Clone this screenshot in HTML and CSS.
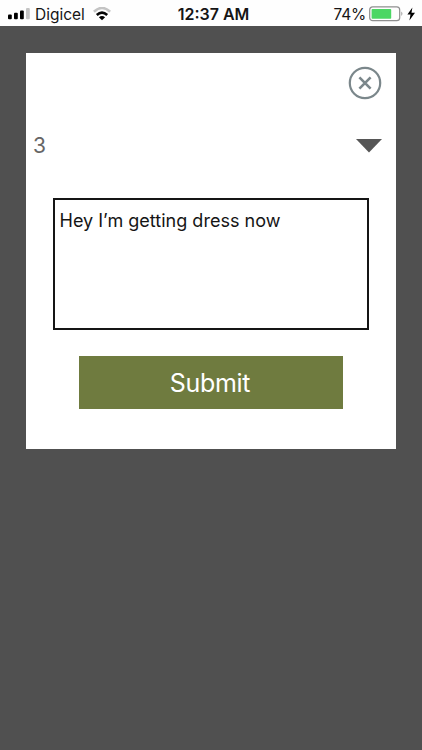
FILE: index.html
```html
<!DOCTYPE html>
<html lang="en">
<head>
<meta charset="utf-8">
<title>Message</title>
<link rel="stylesheet" href="styles.css">
</head>
<body>
<header class="status">
  <div class="carrier">
    <svg class="signal" width="22" height="12" viewBox="0 0 22 12">
      <rect x="0" y="6.5" width="3.8" height="4.8" rx="1"/>
      <rect x="6" y="4.7" width="3.8" height="6.6" rx="1"/>
      <rect x="12" y="2.5" width="3.8" height="8.8" rx="1"/>
      <rect class="dim" x="18" y="0" width="3.8" height="11.3" rx="1"/>
    </svg>
    <span class="carrier-name">Digicel</span>
    <svg class="wifi" width="18" height="14" viewBox="0 0 18 14">
      <path class="arc dim-arc" d="M.9 4.8Q9-2.8 17.1 4.8"/>
      <path class="arc" d="M3.8 8Q9 3.2 14.2 8"/>
      <path d="M5.9 10.2Q9 7.6 12.1 10.2L9 13.2Z"/>
    </svg>
  </div>
  <time class="clock">12:37 AM</time>
  <div class="power">
    <span class="percent">74%</span>
    <svg class="battery" width="47" height="16" viewBox="0 0 47 16">
      <rect class="shell" x=".7" y=".9" width="30" height="13.8" rx="3"/>
      <rect class="charge" x="2.6" y="2.9" width="19.6" height="9.8" rx=".8"/>
      <path class="cap" d="M32.4 5.6Q34.4 7.8 32.4 10Z"/>
      <path d="M43.4 1.6L38.4 8.6H41.5L40.4 14.4L46 6.8H42.5Z"/>
    </svg>
  </div>
</header>
<main class="backdrop">
  <form class="dialog">
    <button class="close" type="button" aria-label="Close">
      <svg width="34" height="34" viewBox="0 0 34 34">
        <circle cx="17" cy="17" r="15.2"/>
        <path d="M11.4 11.4L22.6 22.6M22.6 11.4L11.4 22.6"/>
      </svg>
    </button>
    <div class="picker">
      <span class="picker-value">3</span>
      <svg class="caret" width="26" height="14" viewBox="0 0 26 14"><path d="M0 0H26L13 13.4Z"/></svg>
    </div>
    <div class="message"><span class="message-text">Hey I’m getting dress now</span></div>
    <button class="submit" type="button"><span class="submit-text">Submit</span></button>
  </form>
</main>
</body>
</html>
```
FILE: styles.css
```css
* { box-sizing: border-box; }

body {
  margin: 0;
  height: 750px;
  display: flex;
  flex-direction: column;
  overflow: hidden;
  background: #505050;
  color: #151515;
  font-family: Inter, "Liberation Sans", sans-serif;
}

button { border: 0; padding: 0; font: inherit; }
svg { display: block; }

.status {
  height: 26px;
  flex: none;
  display: grid;
  grid-template-columns: 1fr auto 1fr;
  align-items: center;
  padding: 1px 5px 0 8px;
  background: #fefefe;
  line-height: 26px;
}
.carrier, .power { display: flex; align-items: center; height: 26px; }
.carrier-name { margin-left: 5px; padding-top: 1px; font-size: 15.5px; }
.wifi { margin-left: 8px; }
.arc { fill: none; stroke: #050505; stroke-width: 2.6; }
.dim-arc { stroke: #c4c4c4; }
.dim { fill: #c4c4c4; }
.clock { padding-left: 2px; font-weight: 600; font-size: 16px; }
.power { justify-content: flex-end; }
.percent { margin-right: 3px; padding-top: 1px; font-size: 15.5px; letter-spacing: -.2px; }
.battery { margin-right: 1px; }
.shell { fill: none; stroke: #8f8f8f; stroke-width: 1.2; }
.charge { fill: #4bd763; }
.cap { fill: #8f8f8f; }

.backdrop { flex: 1; padding: 27px 26.5px 0 26px; }
.dialog {
  height: 396px;
  display: flex;
  flex-direction: column;
  background: #fff;
}
.close {
  align-self: flex-end;
  margin: 13px 13.5px 0 0;
  background: none;
}
.close svg { fill: none; stroke: #7b878b; stroke-width: 2.2; }
.close path { stroke-width: 2.6; }
.picker {
  height: 52px;
  margin-top: 20px;
  padding: 0 13.5px 0 7px;
  display: flex;
  align-items: center;
  justify-content: space-between;
}
.picker-value { color: #666; font-size: 21px; line-height: 26px; }
.caret { fill: #565656; }
.message {
  height: 132px;
  margin: 26px 26.5px 0 27px;
  padding: 9px 4.5px;
  border: 2px solid #151515;
  font-size: 18.05px;
  line-height: 24px;
  white-space: nowrap;
}
.submit {
  height: 53px;
  margin: 26px 52.5px 0 53px;
  padding-right: 2px;
  background: #6f7b3f;
  color: #fff;
  font-size: 25px;
  letter-spacing: -.3px;
}
```
